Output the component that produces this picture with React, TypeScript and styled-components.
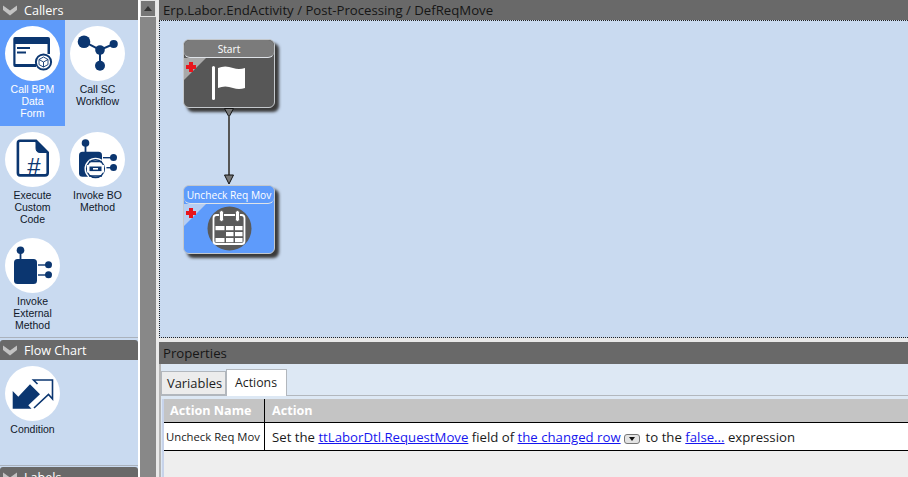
import { ReactNode } from 'react';
import styled, { createGlobalStyle } from 'styled-components';

const GlobalStyle = createGlobalStyle`
  html, body {
    margin: 0;
    padding: 0;
    height: 100%;
    overflow: hidden;
    background: #fff;
  }
  #root { height: 100%; }
  * { box-sizing: border-box; }
`;

const NAVY = '#0b3670';

const Page = styled.div`
  display: flex;
  width: 908px;
  height: 477px;
  overflow: hidden;
  font-family: 'Open Sans', 'Liberation Sans', sans-serif;
`;

const Sidebar = styled.aside`
  display: flex;
  flex-direction: column;
  flex: 0 0 138px;
  background: #c9daf0;
`;

const GroupHeader = styled.div<{ $rounded?: boolean }>`
  display: flex;
  align-items: center;
  flex: 0 0 20px;
  gap: 7px;
  padding-left: 3px;
  background: #696969;
  color: #fff;
  font-size: 12.6px;
  border-radius: ${({ $rounded }) => ($rounded ? '3px 3px 0 0' : '0')};
`;

const Chevron = () => (
  <svg width="14" height="11" viewBox="0 0 14 11">
    <path d="M0 0.5 L7 5.5 L14 0.5 V5 L7 10.5 L0 5 Z" fill="#c2c2c2" />
  </svg>
);

const ToolGrid = styled.div<{ $height: number }>`
  display: grid;
  grid-template-columns: 65px 65px;
  grid-auto-rows: 106px;
  align-content: start;
  height: ${({ $height }) => $height}px;
`;

const Tool = styled.div<{ $active?: boolean }>`
  display: flex;
  flex-direction: column;
  align-items: center;
  padding-top: 6px;
  background: ${({ $active }) => ($active ? '#5e9bfb' : 'transparent')};
  color: ${({ $active }) => ($active ? '#fff' : '#10182a')};
  font-family: 'Liberation Sans', Arial, sans-serif;
  font-size: 10.5px;
  line-height: 12px;
  text-align: center;
`;

const ToolCircle = styled.div`
  width: 55px;
  height: 55px;
  margin-bottom: 2px;
  border-radius: 50%;
  background: #fff;
  svg {
    display: block;
  }
`;

const Divider = styled.div<{ $height: number }>`
  flex: 0 0 ${({ $height }) => $height}px;
  background: #c9daf0;
  border-top: 1px solid #aab2bd;
`;

// all tool icons are drawn on the 55px circle
const ToolIcon = ({ children }: { children: ReactNode }) => (
  <svg width="55" height="55" viewBox="0 0 55 55">
    {children}
  </svg>
);

const FormIcon = () => (
  <ToolIcon>
    <path d="M10 11 H43 Q45 11 45 13 V28 H42.5 V18 H10.5 V38 H31 V41 H10 Q8.3 41 8.3 39 V13 Q8.3 11 10 11 Z" fill={NAVY} />
    <rect x="12" y="21" width="13" height="2" fill={NAVY} />
    <rect x="12" y="25.5" width="9" height="2" fill={NAVY} />
    <circle cx="38.5" cy="36" r="8.6" fill={NAVY} />
    <circle cx="38.5" cy="36" r="6.6" fill="#fff" />
    <path
      d="M38.5 31 L43 33.5 V38.6 L38.5 41 L34 38.6 V33.5 Z M34 33.5 L38.5 36 L43 33.5 M38.5 36 V41"
      fill="none"
      stroke={NAVY}
      strokeWidth="0.9"
    />
  </ToolIcon>
);

const WorkflowIcon = () => (
  <ToolIcon>
    <path d="M14 15.7 L30 24 L43.7 18 M30 24 V39" stroke={NAVY} strokeWidth="2" fill="none" />
    <circle cx="14" cy="15.7" r="6.3" fill={NAVY} />
    <circle cx="30" cy="24" r="4.8" fill={NAVY} />
    <circle cx="43.7" cy="18" r="4.1" fill={NAVY} />
    <circle cx="30" cy="39.7" r="5" fill={NAVY} />
  </ToolIcon>
);

const CodeIcon = () => (
  <ToolIcon>
    <path
      d="M15 8.8 H31 L42.7 20.5 V41 Q42.7 43.4 40 43.4 H15 Q12.9 43.4 12.9 41 V11 Q12.9 8.8 15 8.8 Z"
      fill="#fff"
      stroke={NAVY}
      strokeWidth="2.6"
    />
    <path d="M31 8.8 L42.7 20.5 H35 Q31 20.5 31 16 Z" fill={NAVY} stroke={NAVY} strokeWidth="1" />
    <text x="29" y="43" fontFamily="'Liberation Sans', sans-serif" fontSize="24" fill={NAVY} textAnchor="middle">
      #
    </text>
  </ToolIcon>
);

const BoxIcon = ({ withDisc, shift = 0 }: { withDisc?: boolean; shift?: number }) => (
  <ToolIcon>
    <g transform={`translate(0 ${shift})`}>
      <circle cx="15.5" cy="11" r="3.8" fill={NAVY} />
      <rect x="14.6" y="13" width="1.8" height="7" fill={NAVY} />
      <rect x="9" y="19.7" width="23" height="25" rx="3.5" fill={NAVY} />
      <rect x="33" y="25" width="8" height="1.4" fill={NAVY} />
      <rect x="33" y="35" width="8" height="1.4" fill={NAVY} />
      <circle cx="43.5" cy="25.5" r="3.5" fill={NAVY} />
      <circle cx="43.5" cy="35.5" r="3.5" fill={NAVY} />
      {withDisc && (
        <>
          <circle cx="25.5" cy="36.7" r="11" fill="#fff" />
          <circle cx="25.5" cy="36.7" r="9.6" fill={NAVY} />
          <circle cx="25.5" cy="36.7" r="8.2" fill="#fff" />
          <rect x="17" y="33" width="17" height="7.5" fill="#fff" />
          <rect x="19.5" y="34.5" width="12" height="4.6" fill={NAVY} />
          <rect x="23" y="36" width="5" height="1.6" fill="#fff" />
          <path d="M19 29.5 H32 M19 44 H32" stroke={NAVY} strokeWidth="1.4" />
        </>
      )}
    </g>
  </ToolIcon>
);

const ConditionIcon = () => (
  <ToolIcon>
    <path d="M7.7 25 L13.3 30.7 L25 18.3 L35 28.3 L23.3 39.3 L26.5 42.7 H7.7 Z" fill={NAVY} />
    <path
      d="M32.5 18 L28.5 14 H47.5 V33 L43.5 28.5 L29 42"
      fill="none"
      stroke={NAVY}
      strokeWidth="1.6"
    />
  </ToolIcon>
);

const Scrollbar = styled.div`
  display: flex;
  flex-direction: column;
  flex: 0 0 19px;
  margin-left: 2px;
  border-right: 3px solid #e9e9e9;
  background: #888;
`;

const ScrollButton = styled.div`
  display: flex;
  align-items: center;
  justify-content: center;
  height: 17px;
  border: 1px solid #e4e4e4;
  background: #777;
  &::before {
    content: '';
    border-left: 4px solid transparent;
    border-right: 4px solid transparent;
    border-bottom: 5px solid #333;
  }
`;

const Main = styled.main`
  display: flex;
  flex-direction: column;
  flex: 1;
  min-width: 0;
`;

const PanelTitle = styled.div<{ $height: number }>`
  display: flex;
  align-items: center;
  flex: 0 0 ${({ $height }) => $height}px;
  padding-left: 4px;
  background: #696969;
  color: #161616;
  font-size: 13.2px;
  white-space: nowrap;
`;

const Canvas = styled.section`
  position: relative;
  flex: 0 0 318px;
  background: #c9daf0;
  border: 1px dotted #222;
  border-right: none;
`;

const Node = styled.div<{ $top: number; $color: string }>`
  position: absolute;
  left: 23px;
  top: ${({ $top }) => $top}px;
  width: 92px;
  height: 69px;
  border: 1px solid #c4c8cc;
  border-radius: 6px;
  background: ${({ $color }) => $color};
  box-shadow: 4px 4px 3px #3a3a3a;
  overflow: hidden;
`;

const NodeTitle = styled.div<{ $color: string }>`
  height: 18px;
  border-bottom: 1px solid #dfe3e8;
  border-radius: 6px;
  background: ${({ $color }) => $color};
  color: #fff;
  font-size: 10.2px;
  line-height: 19px;
  text-align: center;
  white-space: nowrap;
`;

const NodeCorner = styled.div<{ $color: string }>`
  position: absolute;
  left: 0;
  top: 18px;
  width: 0;
  height: 0;
  border-top: 22px solid ${({ $color }) => $color};
  border-right: 22px solid transparent;
`;

const Plus = styled.div`
  position: absolute;
  left: 2px;
  top: 22px;
  width: 10px;
  height: 10px;
  background:
    linear-gradient(#e8141c, #e8141c) center / 10px 4px no-repeat,
    linear-gradient(#e8141c, #e8141c) center / 4px 10px no-repeat;
`;

const NodeGlyph = styled.div`
  display: flex;
  align-items: center;
  justify-content: center;
  height: 49px;
`;

const Connector = styled.svg`
  position: absolute;
  left: 59px;
  top: 87px;
`;

const FlagIcon = () => (
  <svg width="36" height="38" viewBox="0 0 36 38">
    <rect x="1" y="2" width="3" height="34" rx="1.5" fill="#fff" />
    <path d="M7 4 Q14 1 22 4 Q28 6 34 4 V24 Q28 26 22 24 Q14 21 7 24 Z" fill="#fff" />
  </svg>
);

const CalendarIcon = () => (
  <svg width="45" height="45" viewBox="0 0 45 45">
    <circle cx="22.5" cy="22.5" r="22" fill="#5a5a5a" />
    <rect x="6.5" y="9" width="31" height="29" rx="3" fill="none" stroke="#fff" strokeWidth="1.8" />
    <rect x="12.5" y="4.5" width="4" height="11" rx="2" fill="#fff" stroke="#5a5a5a" strokeWidth="0.9" />
    <rect x="28.5" y="4.5" width="4" height="11" rx="2" fill="#fff" stroke="#5a5a5a" strokeWidth="0.9" />
    <g fill="#fff">
      <rect x="8.5" y="20" width="9" height="4.2" />
      <rect x="19" y="20" width="7.5" height="4.2" />
      <rect x="28" y="20" width="7.5" height="4.2" />
      <rect x="19" y="26" width="7.5" height="4.2" />
      <rect x="28" y="26" width="7.5" height="4.2" />
      <rect x="8.5" y="32" width="9" height="4.2" />
      <rect x="19" y="32" width="7.5" height="4.2" />
      <rect x="28" y="32" width="7.5" height="4.2" />
    </g>
  </svg>
);

const Splitter = styled.div`
  flex: 0 0 4px;
  background: #e8e8e8;
`;

const Properties = styled.section`
  display: flex;
  flex-direction: column;
  flex: 1;
  min-height: 0;
  border-left: 2px solid #b5b5b5;
  background: #dde8f4;
`;

const TabStrip = styled.div`
  display: flex;
  align-items: flex-end;
  flex: 0 0 32px;
  border-bottom: 1px solid #b2b7bd;
`;

const Tab = styled.div<{ $active?: boolean }>`
  height: ${({ $active }) => ($active ? '27px' : '24px')};
  padding: ${({ $active }) => ($active ? '4px 9px 0 8px' : '3px 3px 0 5px')};
  margin-bottom: ${({ $active }) => ($active ? '-1px' : '0')};
  border: 1px solid #b2b7bd;
  border-bottom: ${({ $active }) => ($active ? 'none' : '1px solid #b2b7bd')};
  background: ${({ $active }) => ($active ? '#fff' : '#ececec')};
  color: #1c1c1c;
  font-size: ${({ $active }) => ($active ? '12.3px' : '12.9px')};
  line-height: 17px;
`;

const Grid = styled.div`
  flex: 1;
  margin: 3px 0 0 1px;
  border-left: 2px solid #c7d3ea;
  background: #eeeeee;
`;

const GridRow = styled.div<{ $head?: boolean }>`
  display: grid;
  grid-template-columns: 100px 1fr;
  height: ${({ $head }) => ($head ? '24px' : '28px')};
  background: ${({ $head }) => ($head ? '#c4c4c4' : '#fff')};
  border-bottom: 1px solid #000;
`;

const GridCell = styled.div<{ $head?: boolean; $small?: boolean }>`
  display: flex;
  align-items: center;
  padding-left: ${({ $small }) => ($small ? '2px' : '6px')};
  color: ${({ $head }) => ($head ? '#fff' : '#1a1a1a')};
  font-size: ${({ $small, $head }) => ($small ? '11.3px' : $head ? '12.6px' : '13.2px')};
  font-weight: ${({ $head }) => ($head ? 700 : 400)};
  white-space: pre;
  & + & {
    border-left: 1px solid #000;
    padding-left: 7px;
  }
`;

const Link = styled.a`
  color: #1616ee;
  text-decoration: underline;
`;

const DropButton = styled.span`
  display: inline-flex;
  align-items: center;
  justify-content: center;
  width: 16px;
  height: 10px;
  margin: 5px 6px 0 3px;
  border: 1px solid #777;
  border-radius: 3px;
  background: #e4e4e4;
  &::before {
    content: '';
    border-left: 3px solid transparent;
    border-right: 3px solid transparent;
    border-top: 4px solid #111;
  }
`;

const ToolItem = ({ label, active, icon }: { label: ReactNode; active?: boolean; icon: ReactNode }) => (
  <Tool $active={active}>
    <ToolCircle>{icon}</ToolCircle>
    {label}
  </Tool>
);

const App = () => (
  <Page>
    <GlobalStyle />
    <Sidebar>
      <GroupHeader>
        <Chevron />
        Callers
      </GroupHeader>
      <ToolGrid $height={317}>
        <ToolItem active icon={<FormIcon />} label={<>Call BPM<br />Data<br />Form</>} />
        <ToolItem icon={<WorkflowIcon />} label={<>Call SC<br />Workflow</>} />
        <ToolItem icon={<CodeIcon />} label={<>Execute<br />Custom<br />Code</>} />
        <ToolItem icon={<BoxIcon withDisc />} label={<>Invoke BO<br />Method</>} />
        <ToolItem icon={<BoxIcon shift={1.3} />} label={<>Invoke<br />External<br />Method</>} />
      </ToolGrid>
      <Divider $height={3} />
      <GroupHeader $rounded>
        <Chevron />
        Flow Chart
      </GroupHeader>
      <ToolGrid $height={105}>
        <ToolItem icon={<ConditionIcon />} label="Condition" />
      </ToolGrid>
      <Divider $height={2} />
      <GroupHeader $rounded>
        <Chevron />
        Labels
      </GroupHeader>
    </Sidebar>
    <Scrollbar>
      <ScrollButton />
    </Scrollbar>
    <Main>
      <PanelTitle $height={20}>Erp.Labor.EndActivity / Post-Processing / DefReqMove</PanelTitle>
      <Canvas>
        <Node $top={18} $color="#575757">
          <NodeTitle $color="#7b7b7b">Start</NodeTitle>
          <NodeCorner $color="#a9a9a9" />
          <Plus />
          <NodeGlyph>
            <FlagIcon />
          </NodeGlyph>
        </Node>
        <Connector width="20" height="78" viewBox="0 0 20 78">
          <path d="M5.5 0.5 H14.5 L10 9 Z" fill="#777" stroke="#111" strokeWidth="1" />
          <rect x="9" y="8" width="2" height="60" fill="#555" />
          <path d="M5.5 67 H14.5 L10 76 Z" fill="#777" stroke="#111" strokeWidth="1" />
        </Connector>
        <Node $top={164} $color="#5e9bfb">
          <NodeTitle $color="#5e9bfb">Uncheck Req Mov</NodeTitle>
          <NodeCorner $color="#b5cdf2" />
          <Plus />
          <NodeGlyph>
            <CalendarIcon />
          </NodeGlyph>
        </Node>
      </Canvas>
      <Splitter />
      <PanelTitle $height={22}>Properties</PanelTitle>
      <Properties>
        <TabStrip>
          <Tab>Variables</Tab>
          <Tab $active>Actions</Tab>
        </TabStrip>
        <Grid>
          <GridRow $head>
            <GridCell $head>Action Name</GridCell>
            <GridCell $head>Action</GridCell>
          </GridRow>
          <GridRow>
            <GridCell $small>Uncheck Req Mov</GridCell>
            <GridCell>
              Set the <Link>ttLaborDtl.RequestMove</Link> field of <Link>the changed row</Link>
              <DropButton />
              to the <Link>false...</Link> expression
            </GridCell>
          </GridRow>
        </Grid>
      </Properties>
    </Main>
  </Page>
);

export default App;
